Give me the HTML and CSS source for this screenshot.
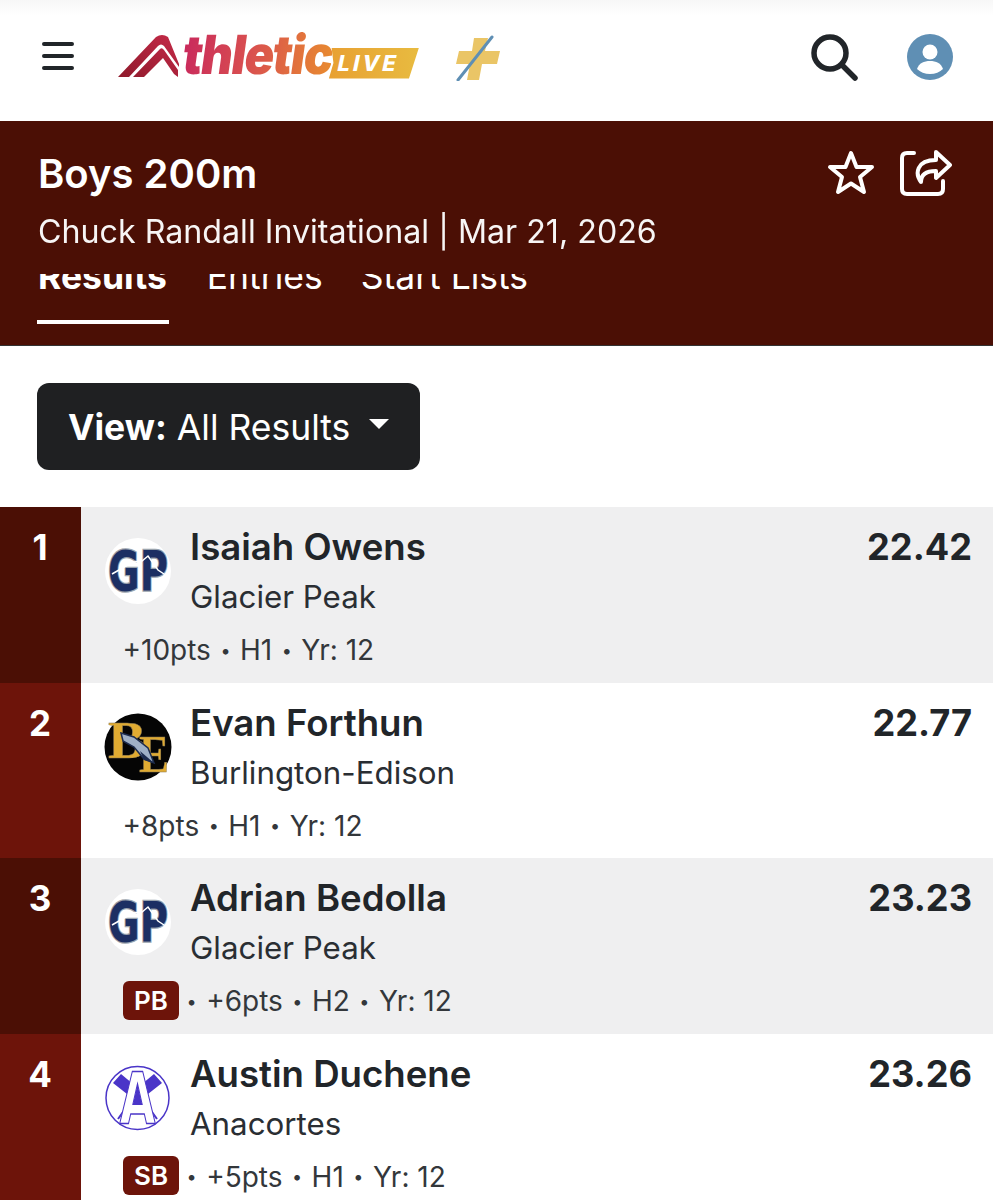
FILE: index.html
```html
<!DOCTYPE html>
<html lang="en">
<head>
<meta charset="utf-8">
<title>Boys 200m</title>
<link rel="stylesheet" href="styles.css">
</head>
<body>
<nav class="topbar">
  <svg class="burger" viewBox="0 0 34 28" width="34" height="28"><path d="M3 2H31M3 14H31M3 26H31" stroke="#212529" stroke-width="4" stroke-linecap="round" fill="none"/></svg>
  <div class="logo">
    <svg class="logo-mark" viewBox="0 0 62 44" width="62" height="44">
      <defs><linearGradient id="mk" x1="0" y1="1" x2="1" y2="0"><stop offset="0" stop-color="#8f1a2c"/><stop offset="1" stop-color="#c52a48"/></linearGradient></defs>
      <path d="M0 43L38 3Q44 -1 50 3L61 30V33L46 12Q43 9 40 12L11 43Z M15 43L42 15Q44 13 46 16L60 36V43L56 40L45 24L26 43Z" fill="url(#mk)"/>
    </svg>
    <span class="logo-word">thletic</span>
    <span class="logo-live"><span class="logo-live-text">LIVE</span></span>
  </div>
  <svg class="plus" viewBox="0 0 46 46" width="46" height="46">
    <path d="M19 3H33L30 16H45L42 29H27L24 45H12L15 29H1L4 16H17Z" fill="#eac566"/>
    <path d="M37 2L3 45" stroke="#5f8fb4" stroke-width="3" stroke-linecap="round"/>
  </svg>
  <div class="spacer"></div>
  <svg class="search" viewBox="0 0 48 48" width="48" height="48"><circle cx="20" cy="20" r="16" fill="none" stroke="#212529" stroke-width="5.500"/><path d="M32 32L45 45" stroke="#212529" stroke-width="5.500" stroke-linecap="round"/></svg>
  <svg class="user" viewBox="0 0 46 46" width="46" height="46"><circle cx="23" cy="23" r="23" fill="#5f8fb4"/><circle cx="23" cy="18" r="7.500" fill="#fff"/><path d="M10 35C12 29 17 27 23 27S34 29 36 35C33 38 28 40 23 40S13 38 10 35Z" fill="#fff"/></svg>
</nav>

<header class="event">
  <div class="event-top">
    <div>
      <h1 class="event-title">Boys 200m</h1>
      <p class="event-sub">Chuck Randall Invitational | Mar 21, 2026</p>
    </div>
    <div class="event-actions">
      <svg viewBox="0 0 48 46" width="48" height="46"><path d="M24 4L29.500 18H45L33 28L37 43L24 34.500L11 43L15 28L3 18H18.500Z" fill="none" stroke="#fff" stroke-width="4" stroke-linejoin="round"/></svg>
      <svg viewBox="0 0 52 48" width="52" height="48"><path d="M14 4H7Q2 4 2 9V40Q2 45 7 45H38Q43 45 43 40V32" fill="none" stroke="#fff" stroke-width="4" stroke-linecap="round"/><path d="M36 3L50 16L36 29V22C27 22 21 25 21 33C15 25 16 11 36 11Z" fill="none" stroke="#fff" stroke-width="4" stroke-linejoin="round"/></svg>
    </div>
  </div>
  <div class="tabs">
    <div class="tab tab-active"><span class="tab-text">Results</span></div>
    <div class="tab"><span class="tab-text">Entries</span></div>
    <div class="tab"><span class="tab-text">Start Lists</span></div>
  </div>
</header>

<div class="controls">
  <div class="view-btn"><b>View:</b>&nbsp;All Results<span class="caret"></span></div>
</div>

<section class="results">
  <article class="row row-shade">
    <div class="rank">1</div>
    <div class="body">
      <div class="main">
        <svg class="crest" viewBox="0 0 68 68" width="68" height="68"><circle cx="34" cy="34" r="33" fill="#fff"/><text class="gp" x="34" y="53" text-anchor="middle" textLength="60" lengthAdjust="spacingAndGlyphs">GP</text><path d="M8 37L22 29L30 25L38 24L44 19L54 33L63 39" fill="none" stroke="#fff" stroke-width="1.500"/></svg>
        <div class="who"><div class="name">Isaiah Owens</div><div class="team">Glacier Peak</div></div>
        <div class="time">22.42</div>
      </div>
      <div class="meta">+10pts<i>•</i>H1<i>•</i>Yr: 12</div>
    </div>
  </article>
  <article class="row">
    <div class="rank">2</div>
    <div class="body">
      <div class="main">
        <svg class="crest" viewBox="0 0 68 68" width="68" height="68"><circle cx="34" cy="34" r="33.500" fill="#050505"/><text class="be" x="4" y="45" textLength="38" lengthAdjust="spacingAndGlyphs">B</text><text class="be" x="35" y="59" textLength="30" lengthAdjust="spacingAndGlyphs">E</text><path d="M17 20L30 24L44 35L50 50L40 46L30 34L19 28Z" fill="#9fb0c6" stroke="#1d2c4f" stroke-width="1.500"/><path d="M36 38L50 50L40 47Z" fill="#1d2c4f"/></svg>
        <div class="who"><div class="name">Evan Forthun</div><div class="team">Burlington-Edison</div></div>
        <div class="time">22.77</div>
      </div>
      <div class="meta">+8pts<i>•</i>H1<i>•</i>Yr: 12</div>
    </div>
  </article>
  <article class="row row-shade">
    <div class="rank">3</div>
    <div class="body">
      <div class="main">
        <svg class="crest" viewBox="0 0 68 68" width="68" height="68"><circle cx="34" cy="34" r="33" fill="#fff"/><text class="gp" x="34" y="53" text-anchor="middle" textLength="60" lengthAdjust="spacingAndGlyphs">GP</text><path d="M8 37L22 29L30 25L38 24L44 19L54 33L63 39" fill="none" stroke="#fff" stroke-width="1.500"/></svg>
        <div class="who"><div class="name">Adrian Bedolla</div><div class="team">Glacier Peak</div></div>
        <div class="time">23.23</div>
      </div>
      <div class="meta"><span class="badge">PB</span><i>•</i>+6pts<i>•</i>H2<i>•</i>Yr: 12</div>
    </div>
  </article>
  <article class="row">
    <div class="rank">4</div>
    <div class="body">
      <div class="main">
        <svg class="crest" viewBox="0 0 68 68" width="68" height="68"><circle cx="33.500" cy="34" r="31.500" fill="#fff" stroke="#4a35c8" stroke-width="1.500"/><path d="M9 19L17 10L29 20L23 30ZM58 19L50 10L38 20L44 30Z" fill="#4a35c8"/><path d="M14 55L24 41M53 55L43 41" stroke="#4a35c8" stroke-width="2"/><path d="M33.500 20L28 44H39Z" fill="#4a35c8"/><text class="an" x="33.500" y="59" text-anchor="middle" textLength="36" lengthAdjust="spacingAndGlyphs">A</text></svg>
        <div class="who"><div class="name">Austin Duchene</div><div class="team">Anacortes</div></div>
        <div class="time">23.26</div>
      </div>
      <div class="meta"><span class="badge">SB</span><i>•</i>+5pts<i>•</i>H1<i>•</i>Yr: 12</div>
    </div>
  </article>
</section>
</body>
</html>
```
FILE: styles.css
```css
* { box-sizing: border-box; }
html, body { margin: 0; padding: 0; }
body {
  height: 1200px;
  overflow: hidden;
  background: #fff;
  color: #212529;
  font-family: Inter, "Noto Sans", sans-serif;
}
.topbar {
  height: 121px;
  display: flex;
  align-items: center;
  padding: 0 40px 0 41px;
  background: linear-gradient(#f7f7f7, #fff 16px);
}
.burger { margin-top: -9px; flex: none; }
.logo {
  display: flex;
  align-items: flex-end;
  margin-left: 43px;
  margin-top: -10px;
  height: 46px;
}
.logo-mark { flex: none; margin-bottom: 1px; }
.logo-word {
  margin-left: 0;
  font-size: 49px;
  line-height: 44px;
  font-weight: 900;
  letter-spacing: -1.500px;
  background: linear-gradient(90deg, #c92a5c, #d9504f 45%, #e88a30);
  -webkit-background-clip: text;
  background-clip: text;
  color: transparent;
  transform: skewX(-8deg) scaleY(1.1);
  transform-origin: bottom;
}
.logo-live {
  width: 91px;
  height: 31px;
  margin: 0 0 0 -1px;
  background: linear-gradient(90deg, #e8a032, #e8bb40);
  clip-path: polygon(4% 0, 100% 0, 89% 100%, 1% 100%, 6% 50%);
  display: flex;
  align-items: center;
  padding-left: 10px;
}
.logo-live-text {
  color: #fff;
  font-size: 22px;
  font-weight: 800;
  letter-spacing: 3px;
  transform: skewX(-12deg);
}
.plus { margin: -6px 0 0 36px; flex: none; }
.spacer { flex: 1; }
.search { margin: -8px 47px 0 0; flex: none; position: relative; left: -2px; }
.user { margin-top: -8px; flex: none; }

.event {
  height: 225px;
  background: #4b0f05;
  border-bottom: 1px solid #333;
  color: #fff;
  display: flex;
  flex-direction: column;
}
.event-top {
  height: 153px;
  flex: none;
  padding: 27px 41px 0 38px;
  display: flex;
  justify-content: space-between;
  align-items: flex-start;
}
.event-title { margin: 0; font-size: 40px; line-height: 52px; font-weight: 600; }
.event-sub { margin: 6px 0 0; font-size: 32.200px; line-height: 52px; font-weight: 400; opacity: .96; }
.event-actions { display: flex; gap: 25px; align-items: flex-start; margin-top: 1px; }
.tabs { display: flex; gap: 36px; padding-left: 37px; height: 71px; overflow: hidden; flex: none; }
.tab { height: 50px; border-bottom: 4px solid transparent; display: flex; align-items: flex-end; padding: 0 1px 23px; }
.tab-active { border-bottom-color: #fff; font-weight: 700; padding: 0 2px 23px 1px; margin-right: 1px; }
.tab-text { font-size: 35.500px; line-height: 40px; white-space: nowrap; }

.controls { padding: 37px 0; }
.view-btn {
  margin-left: 37px;
  width: 383px;
  height: 87px;
  border-radius: 12px;
  background: #1f2022;
  color: #fff;
  display: flex;
  align-items: center;
  padding: 2px 0 0 31px;
  font-size: 35.500px;
}
.view-btn b { font-weight: 700; }
.caret {
  margin: -8px 0 0 19px;
  border-style: solid;
  border-width: 10px 10px 0;
  border-color: #fff transparent transparent;
}

.row { display: flex; height: 175.500px; }
.row-shade { background: #efeff0; }
.rank {
  width: 81px;
  flex: none;
  background: #6d140a;
  color: #fff;
  font-size: 35px;
  font-weight: 700;
  line-height: 50px;
  padding: 15px 1px 0 0;
  text-align: center;
}
.row-shade .rank { background: #4b0f05; }
.body { flex: 1; padding: 15px 21px 0 23px; }
.main { display: flex; align-items: flex-start; }
.crest { flex: none; margin-top: 15px; }
.who { flex: 1; margin-left: 18px; }
.name { font-size: 36.600px; line-height: 50px; font-weight: 600; }
.team { font-size: 31.300px; line-height: 50px; color: #2a2e33; }
.time { font-size: 36.200px; line-height: 50px; font-weight: 700; }
.meta {
  display: flex;
  align-items: center;
  height: 40px;
  margin: 8px 0 0 18.500px;
  font-size: 28px;
  color: #33373b;
}
.meta i { font-style: normal; margin: 0 9.500px; font-size: 18px; }
.meta .badge + i { margin-left: 7.500px; }
.badge {
  width: 56px;
  height: 39px;
  margin: -2px 0 0 0.500px;
  border-radius: 6px;
  background: #6d140a;
  color: #fff;
  font-size: 26px;
  font-weight: 600;
  display: flex;
  align-items: center;
  justify-content: center;
}

.gp {
  font-family: "DejaVu Sans", sans-serif;
  font-size: 56px;
  font-weight: 700;
  fill: #1c2f63;
  stroke: #9aa3ad;
  stroke-width: 2.500px;
  paint-order: stroke;
}
.be {
  font-family: "Liberation Serif", serif;
  font-size: 52px;
  font-weight: 700;
  fill: #e0ab32;
  stroke: #8a7a55;
  stroke-width: .5px;
}
.an {
  font-family: "DejaVu Sans", sans-serif;
  font-size: 71px;
  font-weight: 700;
  fill: #fff;
  stroke: #4a35c8;
  stroke-width: 1.500px;
}
```
